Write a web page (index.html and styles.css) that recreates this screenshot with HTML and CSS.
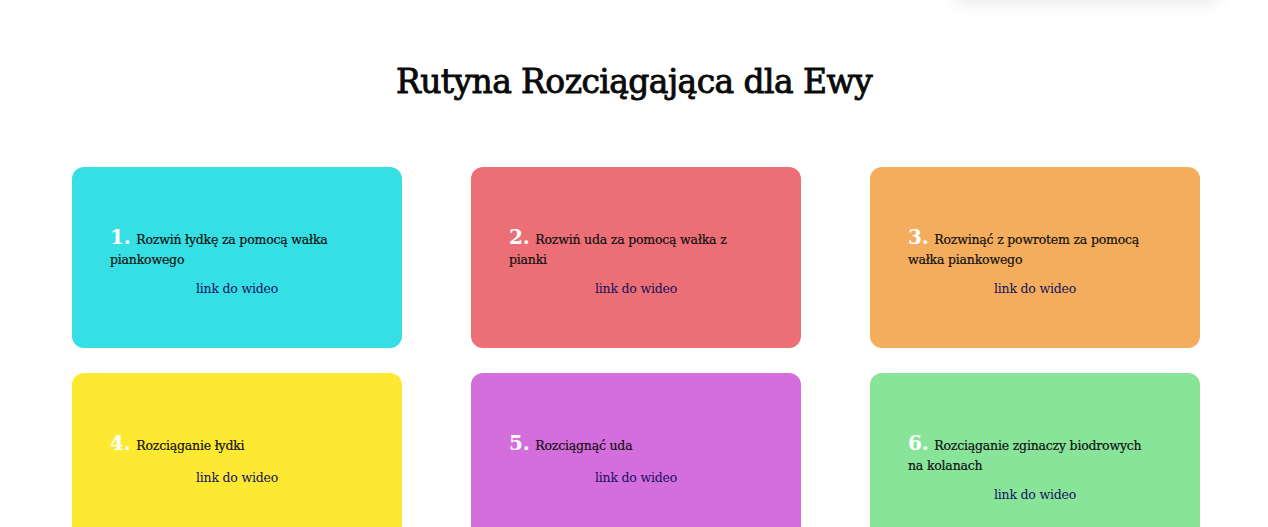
FILE: index.html
```html
<!DOCTYPE html>
<html lang="pl">
<head>
<meta charset="utf-8">
<title>Rutyna Rozciągająca dla Ewy</title>
<link rel="stylesheet" href="styles.css">
</head>
<body>
<div class="menu-shadow"></div>
<main class="page">
  <h1 class="title">Rutyna Rozciągająca dla Ewy</h1>
  <section class="grid">
    <article class="card c1">
      <p class="text"><span class="num">1.</span> Rozwiń łydkę za pomocą wałka piankowego</p>
      <a class="link" href="#">link do wideo</a>
    </article>
    <article class="card c2">
      <p class="text"><span class="num">2.</span> Rozwiń uda za pomocą wałka z pianki</p>
      <a class="link" href="#">link do wideo</a>
    </article>
    <article class="card c3">
      <p class="text"><span class="num">3.</span> Rozwinąć z powrotem za pomocą wałka piankowego</p>
      <a class="link" href="#">link do wideo</a>
    </article>
    <article class="card c4">
      <p class="text"><span class="num">4.</span> Rozciąganie łydki</p>
      <a class="link" href="#">link do wideo</a>
    </article>
    <article class="card c5">
      <p class="text"><span class="num">5.</span> Rozciągnąć uda</p>
      <a class="link" href="#">link do wideo</a>
    </article>
    <article class="card c6">
      <p class="text"><span class="num">6.</span> Rozciąganie zginaczy biodrowych na kolanach</p>
      <a class="link" href="#">link do wideo</a>
    </article>
  </section>
</main>
</body>
</html>
```

FILE: styles.css
```css
* { box-sizing: border-box; }
html, body { margin: 0; padding: 0; background: #fff; overflow: hidden; }
body {
  font-family: "DejaVu Serif", "Liberation Serif", serif;
  color: #111;
  position: relative;
  height: 527px;
}
.menu-shadow {
  position: absolute;
  top: -40px;
  left: 955px;
  width: 262px;
  height: 40px;
  background: #fff;
  box-shadow: 0 2px 18px rgba(0,0,0,0.10);
}
.page {
  padding-top: 61px;
}
.title {
  margin: 0;
  text-align: center;
  font-size: 33px;
  font-weight: normal;
  letter-spacing: -0.6px;
  line-height: 42px;
  color: #0a0a0a;
  -webkit-text-stroke: 0.9px #0a0a0a;
}
.grid {
  margin-top: 64px;
  margin-left: 72px;
  display: grid;
  grid-template-columns: repeat(3, 330px);
  column-gap: 69px;
  row-gap: 25px;
}
.card {
  min-height: 181px;
  border-radius: 12px;
  padding: 62px 38px 30px 38px;
  display: flex;
  flex-direction: column;
  align-items: stretch;
}
.c1 { background: #35dfe3; }
.c2 { background: #eb6f74; }
.c3 { background: #f3ad5d; }
.c4 { background: #fde931; }
.c5 { background: #d56edd; }
.c6 { background: #88e499; }
.text {
  margin: 0;
  min-height: 24px;
  padding-right: 7px;
  font-size: 12.5px;
  line-height: 20px;
  letter-spacing: -0.2px;
  -webkit-text-stroke: 0.2px #111;
}
.num {
  display: inline-block;
  color: #fff;
  -webkit-text-stroke: 0;
  font-family: "DejaVu Serif", serif;
  font-weight: bold;
  font-size: 20px;
  line-height: 16px;
  margin-right: 2px;
}
.link {
  margin-top: 9px;
  align-self: center;
  color: #14125e;
  text-decoration: none;
  font-size: 12.5px;
  line-height: 20px;
  letter-spacing: -0.2px;
}
```
